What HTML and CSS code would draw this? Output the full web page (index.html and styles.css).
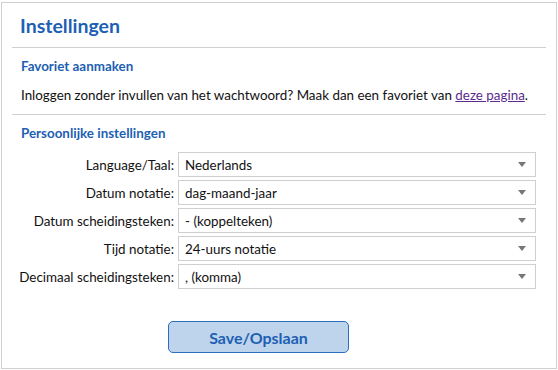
FILE: index.html
```html
<!DOCTYPE html>
<html lang="nl">
<head>
    <meta charset="UTF-8">
    <title>Instellingen</title>
    <link rel="stylesheet" href="styles.css">
</head>
<body>
    <div class="paneel">
        <h1 class="titel">Instellingen</h1>

        <div class="sectie">
            <h2 class="kop">Favoriet aanmaken</h2>
            <p class="tekst">Inloggen zonder invullen van het wachtwoord? Maak dan een favoriet van <a href="#">deze pagina</a>.</p>
        </div>

        <div class="sectie">
            <h2 class="kop">Persoonlijke instellingen</h2>
            <form class="formulier">
                <label for="taal">Language/Taal:</label>
                <span class="keuze">
                    <select id="taal">
                        <option>Nederlands</option>
                        <option>English</option>
                    </select>
                </span>

                <label for="datum">Datum notatie:</label>
                <span class="keuze">
                    <select id="datum">
                        <option>dag-maand-jaar</option>
                        <option>maand-dag-jaar</option>
                        <option>jaar-maand-dag</option>
                    </select>
                </span>

                <label for="scheiding">Datum scheidingsteken:</label>
                <span class="keuze">
                    <select id="scheiding">
                        <option>- (koppelteken)</option>
                        <option>/ (schuine streep)</option>
                        <option>. (punt)</option>
                    </select>
                </span>

                <label for="tijd">Tijd notatie:</label>
                <span class="keuze">
                    <select id="tijd">
                        <option>24-uurs notatie</option>
                        <option>12-uurs notatie</option>
                    </select>
                </span>

                <label for="decimaal">Decimaal scheidingsteken:</label>
                <span class="keuze">
                    <select id="decimaal">
                        <option>, (komma)</option>
                        <option>. (punt)</option>
                    </select>
                </span>

                <div class="knoprij">
                    <button type="button" class="opslaan">Save/Opslaan</button>
                </div>
            </form>
        </div>
    </div>
</body>
</html>
```
FILE: styles.css
```css
body {
    margin: 0;
    background: #fff;
    font-family: Lato, "Open Sans", sans-serif;
    font-size: 13.4px;
    color: #111;
}

.paneel {
    box-sizing: border-box;
    width: 556px;
    height: 367px;
    margin: 2px 0 0 1px;
    padding: 0 10px;
    border: 1px solid #cfcfcf;
}

.titel {
    margin: 11px 0 0;
    padding: 0 8px;
    font-size: 19.5px;
    line-height: 23px;
    font-weight: bold;
    color: #1d5fb3;
}

.sectie {
    margin-top: 10px;
    border-top: 1px solid #d0d0d0;
    padding: 0 9px;
}

.kop {
    margin: 9px 0 0;
    font-size: 13.4px;
    line-height: 18px;
    font-weight: bold;
    color: #1d5fb3;
}

.tekst {
    margin: 11px 0 0;
    line-height: 18px;
}

.tekst a {
    color: #5b2a8c;
}

/* formulier met labels rechts uitgelijnd */
.formulier {
    display: grid;
    grid-template-columns: 160px 1fr;
    column-gap: 3px;
    row-gap: 3px;
    margin: 10px 0 0 -6px;
}

.formulier label {
    text-align: right;
    align-self: center;
    white-space: nowrap;
    margin-right: 1px;
}

.keuze {
    position: relative;
    display: block;
}

.keuze select {
    box-sizing: border-box;
    display: block;
    width: 358px;
    height: 25px;
    padding: 0 20px 0 6px;
    border: 1px solid #cfcfcf;
    border-radius: 0;
    background: #fff;
    font-family: inherit;
    font-size: 13.4px;
    color: #111;
    appearance: none;
    -webkit-appearance: none;
}

.keuze::after {
    content: "";
    position: absolute;
    right: 11px;
    top: 10px;
    border-left: 4px solid transparent;
    border-right: 4px solid transparent;
    border-top: 5px solid #777;
    pointer-events: none;
}

.knoprij {
    grid-column: 1 / 3;
    margin-top: 29px;
    padding-left: 153px;
}

.opslaan {
    width: 181px;
    height: 32px;
    border: 1px solid #2d6dc0;
    border-radius: 5px;
    background: #bdd4ec;
    font-family: inherit;
    font-size: 16px;
    font-weight: bold;
    color: #1d5fb3;
    cursor: pointer;
}

.opslaan:hover {
    background: #a9c6e6;
}
```
